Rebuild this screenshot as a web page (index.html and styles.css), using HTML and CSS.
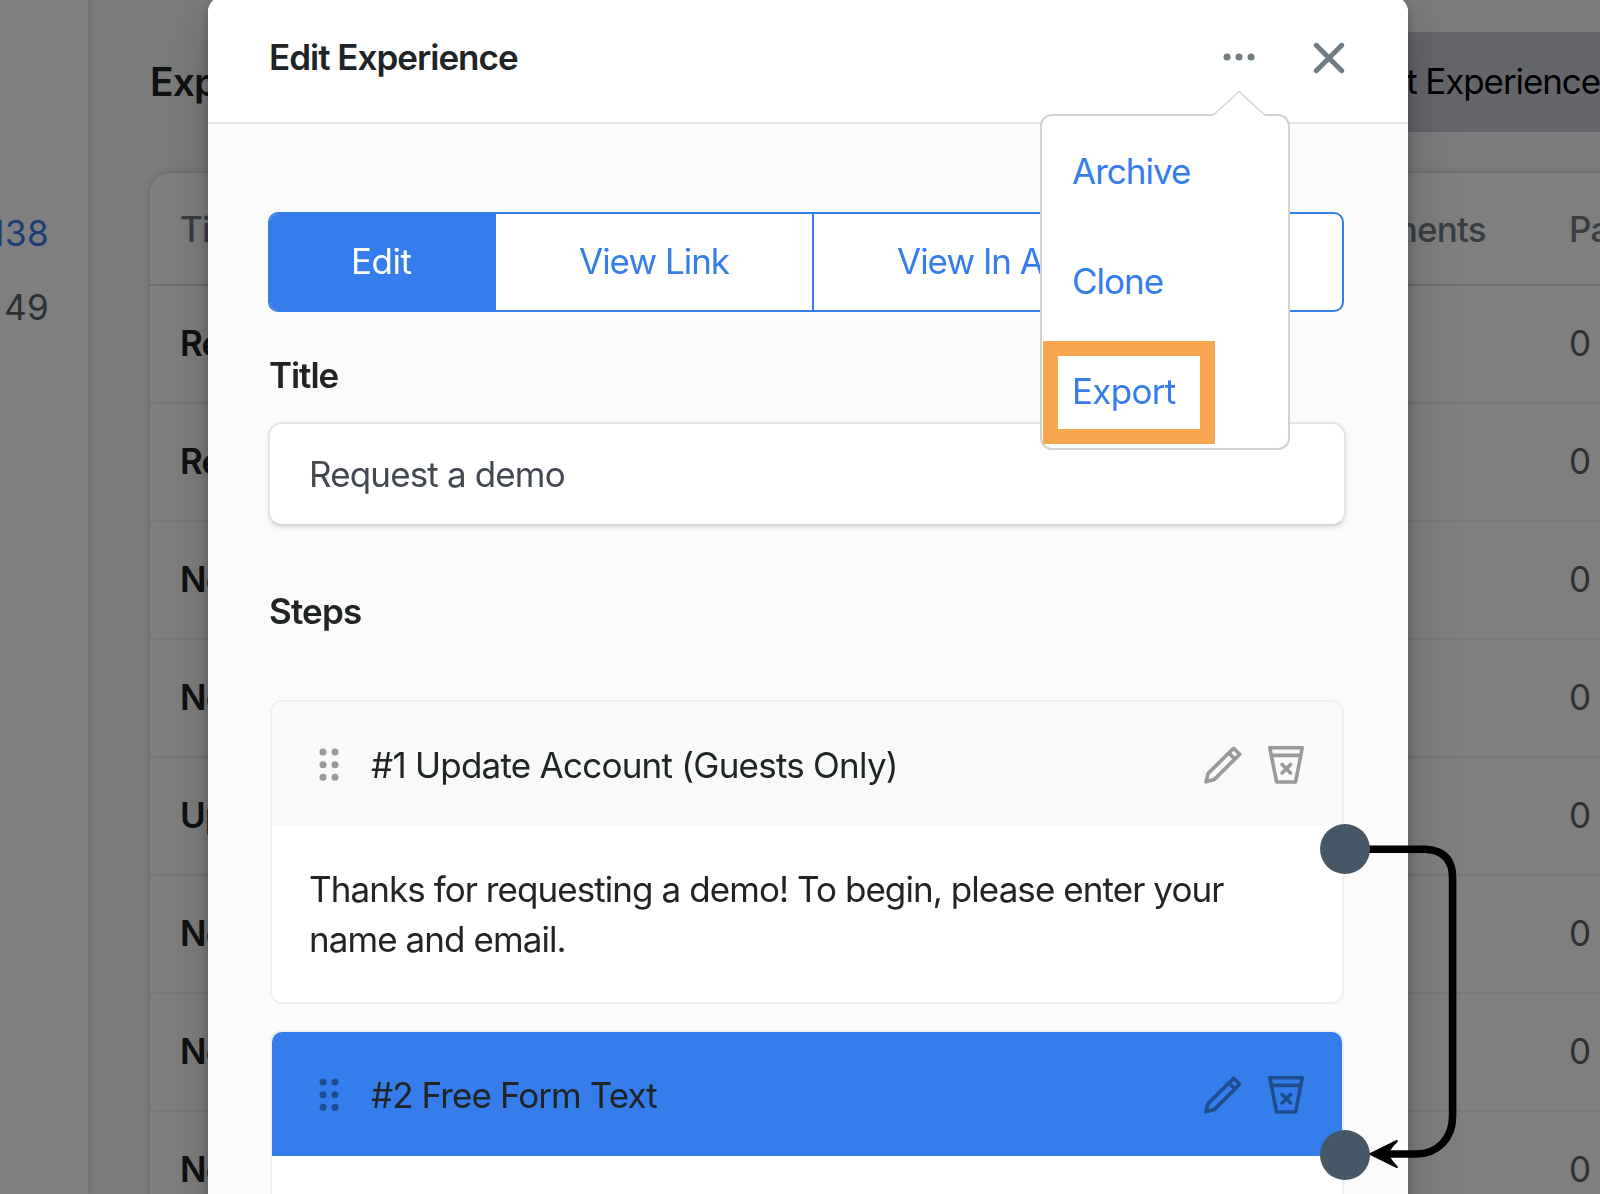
FILE: index.html
```
<!DOCTYPE html>
<html lang="en">
  <head>
    <title>Edit Experience</title>
    <meta charset="utf-8">
    <meta name="viewport" content="width=device-width, initial-scale=1.0">
    <link rel="stylesheet" href="styles.css">
  </head>
  <body>
    <div class="page">
      <aside class="sidebar">
        <div class="count active">138</div>
        <div class="count">49</div>
      </aside>
      <main class="main">
        <div class="main-header">
          <h1>Experiences</h1>
          <button class="import">Import Experience</button>
        </div>
        <div class="table">
          <div class="row head"><span>Title</span><span>Assignments</span><span>Participants</span></div>
          <div class="row"><b>Request</b><span></span><span>0</span></div>
          <div class="row"><b>Request</b><span></span><span>0</span></div>
          <div class="row"><b>New</b><span></span><span>0</span></div>
          <div class="row"><b>New</b><span></span><span>0</span></div>
          <div class="row"><b>Update</b><span></span><span>0</span></div>
          <div class="row"><b>New</b><span></span><span>0</span></div>
          <div class="row"><b>New</b><span></span><span>0</span></div>
          <div class="row"><b>New</b><span></span><span>0</span></div>
        </div>
      </main>
    </div>

    <svg class="defs" width="0" height="0">
      <symbol id="grip" viewBox="0 0 20 34">
        <circle cx="4" cy="4" r="3.5"/><circle cx="16" cy="4" r="3.5"/>
        <circle cx="4" cy="16.7" r="3.5"/><circle cx="16" cy="16.7" r="3.5"/>
        <circle cx="4" cy="29.3" r="3.5"/><circle cx="16" cy="29.3" r="3.5"/>
      </symbol>
      <symbol id="pencil" viewBox="0 0 38 38">
        <path d="M1.9 35.8 4.2 27.4 29.6 2.3 35.7 8.3 10.4 33.4ZM24.8 7 31 13.1"/>
      </symbol>
      <symbol id="trash" viewBox="0 0 36 38">
        <path d="M1.8 1.7H34.2L27.6 36H8.6ZM3 9.4H33M14.2 18.400 22.500 26.900M22.500 18.400 14.200 26.900"/>
      </symbol>
    </svg>

    <div class="overlay">
      <div class="modal">
        <div class="modal-header">
          <h2>Edit Experience</h2>
          <svg class="more" width="32" height="8" viewBox="0 0 32 8">
            <circle cx="4" cy="4" r="3.5"/><circle cx="16" cy="4" r="3.5"/><circle cx="28" cy="4" r="3.5"/>
          </svg>
          <svg class="close" width="32" height="32" viewBox="0 0 32 32"><path d="M3.3 3.3 28.7 28.7M28.7 3.3 3.3 28.7"/></svg>
          <div class="menu">
            <svg class="menu-arrow" width="52" height="28" viewBox="0 0 52 28"><path d="M0 25.5 26 1.5 52 25.5V28H0Z"/><polyline points="0.5,25 26,1.5 51.5,25"/></svg>
            <a>Archive</a>
            <a>Clone</a>
            <a class="marked">Export</a>
          </div>
        </div>
        <div class="modal-body">
          <div class="tabs">
            <div class="tab selected">Edit</div>
            <div class="tab">View Link</div>
            <div class="tab">View In App</div>
          </div>

          <label class="title-label" for="title">Title</label>
          <input id="title" class="input" type="text" value="Request a demo">

          <h3>Steps</h3>
          <div class="steps">
            <div class="step">
              <div class="step-header">
                <svg class="grip" width="20" height="34"><use href="#grip"/></svg>
                <span class="step-name">#1 Update Account (Guests Only)</span>
                <svg class="icon" width="38" height="38"><use href="#pencil"/></svg>
                <svg class="icon" width="36" height="38"><use href="#trash"/></svg>
              </div>
              <div class="step-body">Thanks for requesting a demo! To begin, please enter your<br>name and email.</div>
            </div>
            <div class="step current">
              <div class="step-header">
                <svg class="grip" width="20" height="34"><use href="#grip"/></svg>
                <span class="step-name">#2 Free Form Text</span>
                <svg class="icon" width="38" height="38"><use href="#pencil"/></svg>
                <svg class="icon" width="36" height="38"><use href="#trash"/></svg>
              </div>
              <div class="step-body"></div>
            </div>

            <!-- link from step 1 to step 2 -->
            <svg class="link" width="150" height="370" viewBox="1310 820 150 370">
              <path class="line" d="M1367 849.3H1426Q1452.6 851 1452.6 878V1116C1452.6 1138 1438 1154 1416 1154H1380"/>
              <path d="M1368 1154 1396.5 1140Q1399 1140 1397 1142.5 1390 1149 1389.5 1154 1390 1159 1397 1165.5 1399 1168 1396.5 1168Z"/>
              <circle cx="1345" cy="849" r="25"/>
              <circle cx="1345" cy="1155" r="25"/>
            </svg>
          </div>
        </div>
      </div>
    </div>
  </body>
</html>
```
FILE: styles.css
```
*, *::after {
  box-sizing: border-box;
}

body {
  margin: 0;
  height: 1194px;
  overflow: hidden;
  font: 35px/50px Inter, "Liberation Sans", sans-serif;
  letter-spacing: -0.85px;
  color: #202425;
}

h1, h2, h3 {
  margin: 0;
}

/* page behind the modal */
.page {
  display: flex;
  height: 1194px;
  overflow: hidden;
}

.sidebar {
  flex: none;
  width: 88px;
  padding: 196px 39px 0 0;
  background: #fff;
  box-shadow: 0 0 10px rgba(0, 0, 0, 0.2);
  z-index: 1;
}

.count {
  display: flex;
  justify-content: flex-end;
  line-height: 74px;
  letter-spacing: 0.4px;
  color: #5a6268;
}

.count.active {
  color: #357dea;
}

.main {
  flex: none;
  width: 1552px;
  padding: 32px 0 0 62px;
  background: #f7faf9;
}

.main-header {
  display: flex;
  justify-content: space-between;
  align-items: center;
  height: 100px;
}

.main-header h1 {
  font-size: 39px;
  font-weight: 600;
}

.import {
  height: 100px;
  padding: 0 40px 2px;
  border: 0;
  background: #cbccd8;
  color: #000;
  font: inherit;
  letter-spacing: -1.1px;
}

.table {
  margin-top: 41px;
  background: #fff;
  border-radius: 20px;
  box-shadow: 0 0 8px rgba(0, 0, 0, 0.2);
}

.row {
  display: grid;
  grid-template-columns: 1098px 290px 1fr;
  align-items: center;
  height: 118px;
  padding: 0 0 2px 30px;
  border-bottom: 2px solid #eeeeef;
  color: #5a6268;
}

.row span:last-child {
  padding-left: 1px;
}

.row b {
  font-weight: 600;
  color: #202425;
}

.row.head {
  height: 113px;
  padding-bottom: 0;
  border-bottom-color: #dcdcdd;
  font-weight: 500;
  color: #707c84;
}

/* modal */
.overlay {
  position: fixed;
  inset: 0;
  z-index: 2;
  background: rgba(0, 0, 0, 0.5);
}

.modal {
  width: 1200px;
  height: 1300px;
  margin: -4px 0 0 208px;
  background: #fbfbfb;
  border-radius: 16px;
  box-shadow: 0 14px 60px rgba(0, 0, 0, 0.22), 0 4px 10px rgba(20, 25, 50, 0.3);
}

.modal-header {
  position: relative;
  display: flex;
  align-items: center;
  height: 128px;
  padding: 0 63px 4px 61px;
  background: #fff;
  border-bottom: 2px solid #e4e4e4;
  border-radius: 16px 16px 0 0;
}

.modal-header h2 {
  flex: 1;
  font-size: 35px;
  font-weight: 600;
  letter-spacing: -1px;
}

.more {
  margin-right: 58px;
  fill: #6f7c83;
}

.close {
  position: relative;
  top: 1px;
  stroke: #6f7c83;
  stroke-width: 5;
  stroke-linecap: round;
}

.menu {
  position: absolute;
  top: 118px;
  right: 118px;
  z-index: 3;
  width: 250px;
  height: 336px;
  background: #fff;
  border: 2px solid #d2d2d2;
  border-radius: 12px;
}

.menu-arrow {
  position: absolute;
  top: -26px;
  left: 171px;
  fill: #fff;
}

.menu-arrow polyline {
  fill: none;
  stroke: #d8d8d8;
  stroke-width: 1.6;
}

.menu a {
  display: block;
  height: 110px;
  padding-left: 30px;
  line-height: 110px;
  letter-spacing: -1px;
  color: #357dea;
}

.menu .marked {
  position: relative;
  letter-spacing: -0.7px;
}

.marked::after {
  content: "";
  position: absolute;
  top: 5px;
  left: 1px;
  width: 172px;
  height: 103px;
  border: 15px solid #f9a650;
}

.modal-body {
  padding: 88px 60px 0;
}

.tabs {
  display: flex;
  width: 1076px;
  height: 100px;
  border: 2px solid #357dea;
  border-radius: 10px;
  background: #fff;
  overflow: hidden;
  color: #357dea;
}

.tab {
  padding-left: 83px;
  line-height: 95px;
  letter-spacing: -1px;
}

.tab.selected {
  width: 226px;
  padding-left: 81px;
  background: #357dea;
  color: #fff;
  letter-spacing: -0.5px;
}

.tab + .tab + .tab {
  flex: 1;
  border-left: 2px solid #357dea;
}

.tab:nth-child(2) {
  width: 316px;
}

.title-label {
  display: block;
  margin: 38px 0 22px 1px;
  font-weight: 600;
  letter-spacing: -1.1px;
}

.input {
  display: block;
  width: 1078px;
  height: 104px;
  padding: 0 39px;
  border: 2px solid #e2e3e4;
  border-bottom-color: #d6d7d8;
  border-radius: 14px;
  background: #fff;
  box-shadow: 0 2px 5px rgba(0, 0, 0, 0.1);
  font: inherit;
  letter-spacing: -0.85px;
  color: #424851;
}

h3 {
  margin: 60px 0 64px 1px;
  font-size: 35px;
  font-weight: 600;
}

.steps {
  position: relative;
  margin: 0 4px 0 2px;
}

.step {
  width: 1074px;
  height: 304px;
  margin-bottom: 26px;
  border: 2px solid #ebf0f5;
  border-radius: 12px;
  background: #fff;
  overflow: hidden;
}

.step-header {
  display: flex;
  align-items: center;
  height: 124px;
  padding: 2px 38px 0 47px;
  background: #f8f9fb;
}

.current .step-header {
  background: #357dea;
}

.step-name {
  flex: 1;
  padding-left: 32px;
  letter-spacing: -0.76px;
}

.current .step-name {
  letter-spacing: -0.92px;
}

.grip {
  fill: #000;
  opacity: 0.38;
}

.icon {
  margin-left: 26px;
  fill: none;
  stroke: #000;
  stroke-width: 3.6;
  stroke-linejoin: round;
  stroke-linecap: round;
  opacity: 0.38;
}

.step-body {
  padding: 38px 37px;
  letter-spacing: -0.93px;
  white-space: nowrap;
}

.link {
  position: absolute;
  top: 120px;
  left: 1040px;
}

.link circle {
  fill: #465766;
}

.link .line {
  fill: none;
  stroke: #000;
  stroke-width: 7.6;
}
```
